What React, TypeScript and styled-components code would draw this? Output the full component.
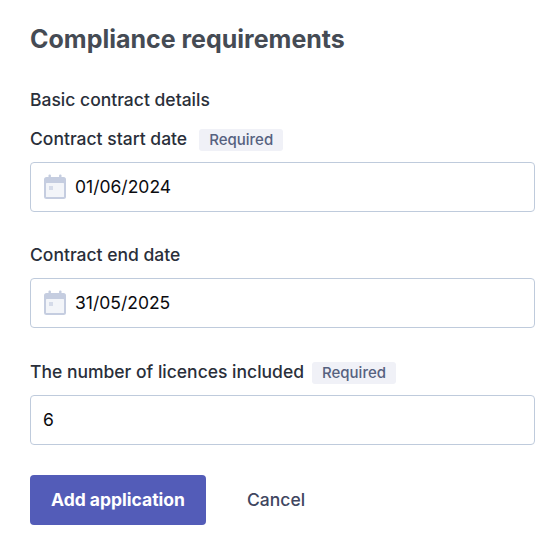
import * as React from "react";
import styled, { createGlobalStyle } from "styled-components";

const GlobalStyle = createGlobalStyle`
  html, body {
    margin: 0;
    padding: 0;
    background: #fff;
  }
  body {
    font-family: Inter, "Liberation Sans", sans-serif;
  }
`;

const CalendarIcon = () => (
  <IconWrap>
    <svg width="24" height="26" viewBox="0 0 24 26" fill="none">
      <rect x="1" y="3" width="22" height="22" rx="2.5" fill="#c5cde0" />
      <rect x="3" y="9" width="18" height="14" rx="0.5" fill="#f3f5f9" />
      <rect x="5.5" y="0.5" width="2.4" height="5" rx="1" fill="#c5cde0" />
      <rect x="16.1" y="0.5" width="2.4" height="5" rx="1" fill="#c5cde0" />
      <rect x="6" y="12" width="4" height="4" fill="#d5dbe9" />
    </svg>
  </IconWrap>
);

export default function App() {
  return (
    <Page>
      <GlobalStyle />
      <Title>Compliance requirements</Title>
      <SectionLabel>Basic contract details</SectionLabel>
      <Field>
        <LabelRow $gap={12}>
          <Label>Contract start date</Label>
          <RequiredTag>Required</RequiredTag>
        </LabelRow>
        <InputBox>
          <CalendarIcon />
          <Value>01/06/2024</Value>
        </InputBox>
      </Field>
      <Field>
        <LabelRow $gap={10}>
          <Label>Contract end date</Label>
        </LabelRow>
        <InputBox>
          <CalendarIcon />
          <Value>31/05/2025</Value>
        </InputBox>
      </Field>
      <Field>
        <LabelRow $gap={8}>
          <Label>The number of licences included</Label>
          <RequiredTag>Required</RequiredTag>
        </LabelRow>
        <InputBox>
          <Value>6</Value>
        </InputBox>
      </Field>
      <Actions>
        <PrimaryButton>Add application</PrimaryButton>
        <CancelButton>Cancel</CancelButton>
      </Actions>
    </Page>
  );
}

const Page = styled.div`
  width: 558px;
  height: 546px;
  box-sizing: border-box;
  padding: 24px 23px 0 30px;
  overflow: hidden;
`;
const Title = styled.h1`
  margin: 0;
  font-size: 25px;
  line-height: 30px;
  font-weight: 700;
  color: #454b54;
`;
const SectionLabel = styled.div`
  margin-top: 33.8px;
  font-size: 17.5px;
  line-height: 24px;
  font-weight: 500;
  color: #2a2f3a;
`;
const Field = styled.div`
  margin-bottom: 31.5px;
`;
const LabelRow = styled.div<{ $gap: number }>`
  display: flex;
  align-items: center;
  gap: ${(p) => p.$gap}px;
  height: 24px;
  margin-top: 15px;
  margin-bottom: 11px;
`;
const Label = styled.label`
  font-size: 17.5px;
  line-height: 24px;
  font-weight: 500;
  color: #2a2f3a;
`;
const RequiredTag = styled.span`
  display: inline-flex;
  align-items: center;
  height: 22px;
  margin-top: 2px;
  padding: 0 10px;
  border-radius: 3px;
  background: #f0f1f7;
  color: #56617f;
  font-size: 15px;
  font-weight: 500;
`;
const InputBox = styled.div`
  display: flex;
  align-items: center;
  gap: 8px;
  box-sizing: border-box;
  height: 50px;
  padding-left: 12px;
  border: 1px solid #bfcbdc;
  border-radius: 4px;
  background: #fff;
`;
const IconWrap = styled.span`
  display: flex;
  width: 24px;
  height: 26px;
`;
const Value = styled.span`
  font-size: 17.5px;
  line-height: 24px;
  color: #0b0b0f;
`;
const Actions = styled.div`
  display: flex;
  align-items: center;
  gap: 41px;
  margin-top: -1.5px;
`;
const PrimaryButton = styled.button`
  width: 176px;
  height: 50px;
  padding: 0;
  border: none;
  border-radius: 4px;
  background: #535cb8;
  color: #fff;
  font-family: inherit;
  font-size: 17.5px;
  font-weight: 700;
`;
const CancelButton = styled.button`
  padding: 0;
  border: none;
  background: none;
  color: #40465f;
  font-family: inherit;
  font-size: 17.5px;
  font-weight: 500;
`;
